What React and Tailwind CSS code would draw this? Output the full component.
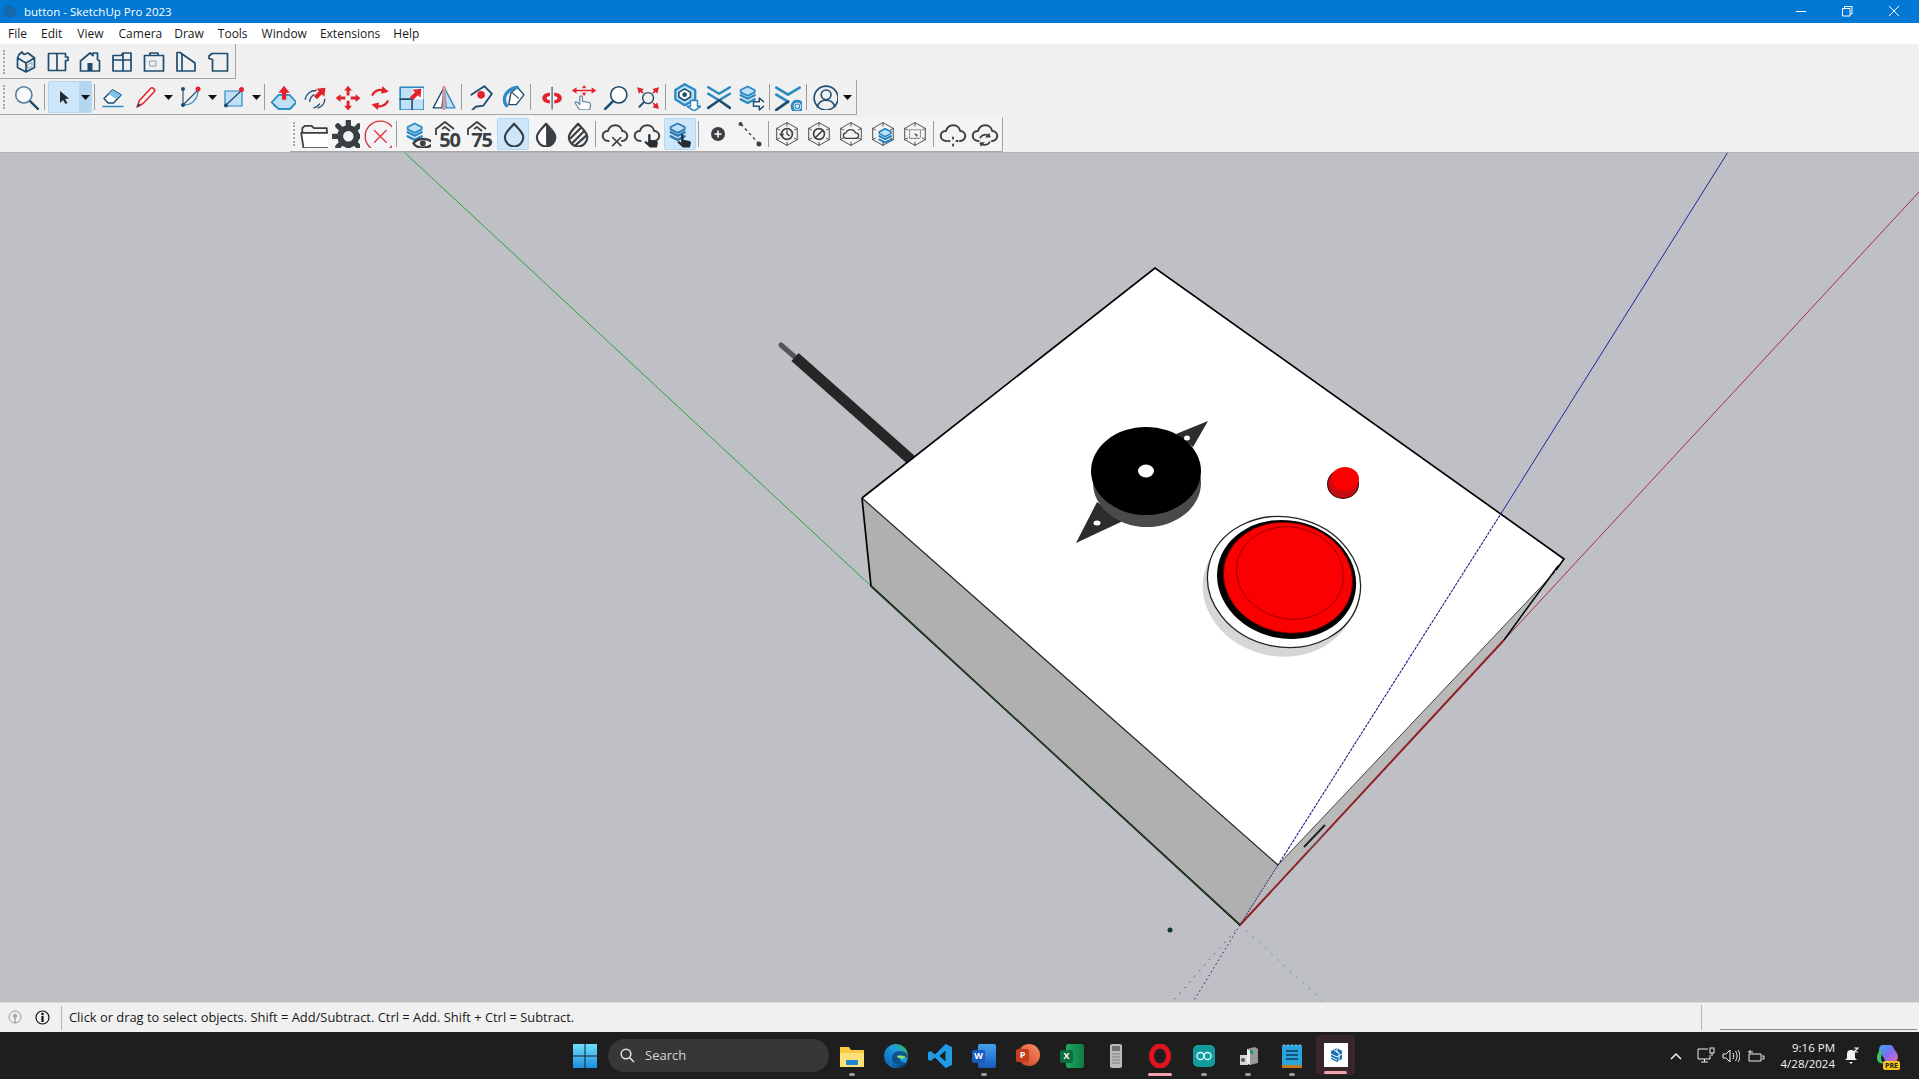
import React from "react";

const N = "#1f4d70", B = "#2b8ac4", L = "#bfe0f5", R = "#e3212b", D = "#3a3f44";

const S = ({ children, s = 24 }) => (
  <svg width={s} height={s} viewBox="0 0 24 24" fill="none" strokeLinecap="round" strokeLinejoin="round">{children}</svg>
);
const Nv = ({ d, w = 1.7 }) => <path d={d} stroke={N} strokeWidth={w} />;
const Arrow = ({ x, y, r = 0, s = 1 }) => (
  <path transform={`translate(${x} ${y}) rotate(${r}) scale(${s})`} d="M0-5l4 5H1.500v5h-3V0H-4z" fill={R} />
);
const Ti = ({ children, className = "w-8" }) => (
  <div className={`flex items-center justify-center h-[30px] shrink-0 ${className}`}>{children}</div>
);
const Act = ({ children, className = "" }) => (
  <div className={`flex items-center justify-center h-[32px] w-8 shrink-0 bg-[#cde6f9] border border-[#b5d8f2] rounded-[2px] ${className}`}>{children}</div>
);
const Sep = () => <div className="mx-[2px] w-px h-[26px] bg-[#9c9c9c] shrink-0" />;
const Grip = ({ className }) => <div className={`w-[2px] h-[24px] border-l-2 border-dotted border-[#a9a9a9] shrink-0 ${className}`} />;
const Dd = () => (
  <div className="flex items-center justify-center h-[30px] w-3 shrink-0">
    <svg width="9" height="5" viewBox="0 0 9 5"><path d="M0 0h9L4.500 5z" fill="#111" /></svg>
  </div>
);

const Hex = ({ children }) => (
  <S s={26}>
    <path d="M12 1.500l9.500 5.300v10.400L12 22.500l-9.500-5.300V6.800z" stroke="#55595c" strokeWidth="1" />
    <path d="M12 1.500v3M2.500 17.200l2.600-1.400M21.500 17.200l-2.600-1.400M12 22.500v-3M2.500 6.800l2.600 1.400M21.500 6.800l-2.600 1.400" stroke="#55595c" strokeWidth="1" />
    {children}
  </S>
);
const Cloud = ({ c = D, w = 1.700 }) => (
  <path d="M6.500 18C3.500 18 1.500 16 1.500 13.500S3.500 9.500 6 9.500C6.800 6.500 9.200 4.500 12.200 4.500c3.200 0 5.500 2.200 6 5 2.500.2 4.300 2 4.300 4.200S20.500 18 18 18" stroke={c} strokeWidth={w} />
);
const Hand = () => (
  <path d="M13 13a1 1 0 012 0v4l5 1c1 .3 1.500 1 1.300 2l-.8 3.500h-6L10 19.500c-.5-1 .8-1.800 1.600-1l1.400 1z" fill="#262c33" />
);
const Layers = ({ c = B }) => (
  <g stroke={c} strokeWidth="2">
    <path d="M4 6l6-3 6 3v2l-6 3-6-3z" fill={L} strokeWidth="1.600" />
    <path d="M4 10.500l6 3 6-3M4 14l6 3 6-3" />
  </g>
);
const Drop = ({ children }) => (
  <S s={26}>
    {children}
    <path d="M13 2.500c4 4.800 8.500 8 8.500 12.500a8.500 8.500 0 01-17 0c0-4.500 4.500-7.700 8.500-12.500z" stroke={D} strokeWidth="2" />
  </S>
);
const House = ({ t }) => (
  <div className="relative w-[30px] h-[28px]">
    <svg width="30" height="28" viewBox="0 0 30 28" className="absolute left-0 top-0">
      <path d="M2 15V9l9-7 9 7M8 9l3-2 5 4" stroke={D} strokeWidth="1.800" fill="none" strokeLinejoin="round" />
    </svg>
    <span className="absolute right-[4px] bottom-[-2px] text-[20px] leading-[20px] font-bold text-[#3a3f44] tracking-[-1px] font-['Open_Sans',sans-serif]">{t}</span>
  </div>
);

const Row1 = () => [
  <S key="1"><Nv d="M3.500 8v9.500L12 22l8.500-4.500V8L14 3l-4 1.500L8 2 5 4.500zM3.500 8l8.500 5 8.500-5M12 13v9" /><path d="M14 14.500l4-2v4l-4 2z" stroke="#7da0b8" /></S>,
  <S key="2"><Nv d="M2.500 3.500h17V7H22v3.500h-2.500v10h-17zM11 3.500v17" /></S>,
  <S key="3"><Nv d="M2.500 21V11L12 3l3 2.500V3h4.500v6.500l2 1.500v10z" /><rect x="9.500" y="13" width="5" height="8" fill={N} /></S>,
  <S key="4"><Nv d="M3 21V5.500h8L13 3h8v18zM3 10h18M13 3v18" /></S>,
  <S key="5"><Nv d="M2.500 5.500H8V3h8v2.500h5.500V21h-19zM2.500 5.500h19" /><rect x="8" y="11" width="6" height="5" stroke="#8aa0b2" /></S>,
  <S key="6"><Nv d="M3 21V2.500h3L21 13v8zM8 4v17" /></S>,
  <S key="7"><Nv d="M6 3.500h15.500v17.500H6.500V9.500L3 8.500V6z" /></S>,
].map((x, i) => <Ti key={i}>{x}</Ti>);

const Search = ({ c = "#5c7f9a" }) => (
  <S s={26}>
    <circle cx="10" cy="10" r="7.500" stroke={c} strokeWidth="1.500" fill="#f7fbfe" />
    <path d="M16 16l7 7" stroke={N} strokeWidth="2.200" />
  </S>
);

export default function App() {
  return (
    <div className="w-[1919px] h-[1079px] overflow-hidden flex flex-col bg-[#f0f0f0] font-['Open_Sans',sans-serif]">
      {/* title bar */}
      <div className="h-[23px] shrink-0 bg-[#0078d4] flex items-center text-white">
        <div className="ml-[3px] w-[13px] h-[13px] rounded-full bg-[#1268ad]" />
        <span className="ml-[8px] text-[11.500px] leading-[23px]">button - SketchUp Pro 2023</span>
        <div className="ml-auto flex items-center">
          <Win><path d="M0 5.500h10" stroke="#fff" /></Win>
          <Win className="ml-[35px]"><path d="M.5 2.500h7.500v7.500H.5zM2.500 2.500V.5h7.500v7.500H8" stroke="#fff" /></Win>
          <Win className="ml-[36px] mr-[19px]"><path d="M0 0l10 10M10 0L0 10" stroke="#fff" /></Win>
        </div>
      </div>
      {/* menu */}
      <div className="h-[21px] shrink-0 bg-white flex items-center pl-[8px] gap-[14px] text-[12px] text-[#1a1a1a]">
        <span>File</span>
        <span>Edit</span>
        <span className="ml-px">View</span>
        <span className="ml-px">Camera</span>
        <span className="-ml-[2px]">Draw</span>
        <span>Tools</span>
        <span>Window</span>
        <span className="-ml-px">Extensions</span>
        <span className="-ml-px">Help</span>
      </div>
      {/* toolbar 1 */}
      <div className="h-[36px] shrink-0 flex items-start">
        <div className="h-[35px] w-[236px] pt-[2px] flex items-center border-r border-b border-[#a6a6a6]">
          <Grip className="ml-[3px] mr-[5px]" />
          <Row1 />
        </div>
      </div>
      {/* toolbar 2 */}
      <div className="h-[36px] shrink-0 flex items-start">
        <div className="h-[35px] w-[857px] flex items-center border-r border-b border-[#a6a6a6]">
          <Grip className="ml-[3px] mr-[5px]" />
          <Ti><Search /></Ti>
          <Sep />
          <div className="flex h-[32px] w-[44px] ml-px bg-[#cde6f9] border border-[#b5d8f2] rounded-[2px] shrink-0">
            <div className="flex-1 flex items-center justify-center">
              <svg width="14" height="16" viewBox="0 0 14 16"><path d="M3 2l9 7.500-4 .5 2.500 4-2 1L6 11l-3 3z" fill="#1f2a33" /></svg>
            </div>
            <div className="w-[12px] bg-[#b5d6ef] flex items-center justify-center">
              <svg width="9" height="5" viewBox="0 0 9 5"><path d="M0 0h9L4.500 5z" fill="#111" /></svg>
            </div>
          </div>
          <Sep />
          <Ti><S><path d="M3 13.500L11.500 5 20 10l-7.500 8H7z" stroke={N} strokeWidth="1.500" fill="#fff" /><path d="M7.500 9L15 14l5-4-8.500-5z" fill="#7ec4ea" /><path d="M2 21.500h20" stroke={B} strokeWidth="1.400" /></S></Ti>
          <Ti className="w-8 ml-px"><S><path d="M3 22l2.500-6.500L17 3c1.500-1 4.500 1.500 3.500 3.500L9 18.500z" stroke={R} strokeWidth="1.500" fill="#fdf0f0" /><path d="M3 22l1.300-4 2.500 2z" fill={N} /></S></Ti>
          <Dd />
          <Ti><S><path d="M5 20l15-15" stroke={N} strokeWidth="1.100" /><path d="M5 4v15" stroke={N} strokeWidth="1.100" /><path d="M6 20c8 0 14-6 14-15" stroke={B} strokeWidth="1.300" /><circle cx="5" cy="4" r="2" fill={N} /><circle cx="5" cy="20" r="2" fill={N} /><circle cx="20" cy="4" r="2.500" fill={R} /></S></Ti>
          <Dd />
          <Ti><S><rect x="3" y="6" width="17" height="15" fill={L} stroke={B} strokeWidth="1.200" /><path d="M4 20L19 6" stroke={N} strokeWidth="1.200" /><circle cx="4" cy="20.500" r="2" fill={N} /><circle cx="19.500" cy="4.500" r="2.500" fill={R} /></S></Ti>
          <Dd />
          <Sep />
          <Ti className="w-8"><S s={26}><path d="M1.500 17L8 10h10l6.500 7-6 6H8z" fill={L} stroke={B} strokeWidth="1.500" /><path d="M3.500 19.500L8 23h10.500l4.500-5" stroke={B} strokeWidth="1.500" /><Arrow x={13} y={8} s={1.300} /></S></Ti>
          <Ti><S s={26}><path d="M3 14c1-5 5-8 10-8M7 16c.5-3 2-5 4-6M15 22c3-1 6-4 6-8M11 22c2-.5 4-2 5-3.500" stroke={N} strokeWidth="1.300" /><Arrow x={17} y={8} r={45} s={1.300} /></S></Ti>
          <Ti><S s={26}><Arrow x={13} y={6} s={.9} /><Arrow x={13} y={20} r={180} s={.9} /><Arrow x={6} y={13} r={-90} s={.9} /><Arrow x={20} y={13} r={90} s={.9} /></S></Ti>
          <Ti><S s={26}><path d="M6 10a8 8 0 0112-3M20 16a8 8 0 01-12 3" stroke={R} strokeWidth="2" /><path d="M15 2l6 5-7 2zM11 24l-6-5 7-2z" fill={R} /></S></Ti>
          <Ti><S s={26}><rect x="2" y="3" width="22" height="21" stroke={B} strokeWidth="1.500" fill={L} /><path d="M2 14h11v10" stroke={N} strokeWidth="1.500" /><rect x="13.500" y="4" width="10" height="10" fill="#fff" /><Arrow x={17} y={9} r={45} s={1.300} /></S></Ti>
          <Ti className="w-8"><S s={26}><path d="M13 3L3 22h8z" stroke={N} strokeWidth="1.300" fill="#fff" /><path d="M13 3l10 19h-8z" stroke={B} strokeWidth="1.300" fill={L} /><path d="M13 3v20" stroke="#d59aa0" strokeWidth="3" /></S></Ti>
          <Sep />
          <Ti className="w-8"><S s={26}><path d="M4 10l12-8 7 7-8 11-7 1-3 3" stroke={N} strokeWidth="1.700" /><circle cx="13" cy="10" r="3.500" fill={R} /></S></Ti>
          <Ti><S s={26}><path d="M11 8l6-5 6 7-7 9H9z" stroke={N} strokeWidth="1.300" fill="#fff" /><path d="M17 3c-5 0-12 5-12 11 0 3 1 5 2 6" stroke={B} strokeWidth="3" /><path d="M12 8l6 5" stroke={N} strokeWidth="1" /></S></Ti>
          <Sep />
          <Ti className="w-8 ml-[2px]"><S s={26}><path d="M13 3v20" stroke={N} strokeWidth="1" /><path d="M4 13c0-3 3-5 7-5v3c-2 0-3 1-3 2 0 1 1 2 3 2v3c-4 0-7-2-7-5zM22 13c0-3-3-5-7-5v3c2 0 3 1 3 2 0 1-1 2-3 2v3c4 0 7-2 7-5z" fill={R} /></S></Ti>
          <Ti><S s={26}><path d="M9 24l-4-6c-.5-1.500 1-2 2-1l2 2V12c0-1.500 2.500-1.500 2.500 0v4l6 1c1.500.5 1.500 2 1.500 3l-1 4z" stroke="#6c8ba2" strokeWidth="1.200" fill="#fff" /><path d="M3 6h20" stroke={R} strokeWidth="1.600" /><path d="M2 6l4-3v6zM24 6l-4-3v6zM11 8l2 3 2-3zM11 4l2-3 2 3z" fill={R} /></S></Ti>
          <Ti><S s={26}><circle cx="15.500" cy="10" r="7.500" stroke={N} strokeWidth="1.500" fill="#fff" /><path d="M10 16L3 23" stroke={N} strokeWidth="2.400" /></S></Ti>
          <Ti><S s={26}><circle cx="13" cy="13" r="5" stroke={N} strokeWidth="1.300" /><path d="M9 17l-4 4" stroke={N} strokeWidth="1.800" /><path d="M3 3l6 1.500L4.500 9zM23 3l-6 1.500L21.500 9zM23 23l-6-1.500 4.500-4.500z" fill={R} /><path d="M5 5l3 3M21 5l-3 3M21 21l-3-3" stroke={R} strokeWidth="1.600" /></S></Ti>
          <Sep />
          <Ti className="w-8 ml-[3px]"><S s={28}><path d="M10 1l9 5v8l-9 5-8-5V6z" stroke={B} strokeWidth="2" fill={L} /><path d="M10 5l5 3v4l-5 3-5-3V8z" stroke={N} strokeWidth="1.400" fill="#fff" /><circle cx="10" cy="10" r="2" fill={N} /><path d="M15 15h6v5h3l-6 4-6-4h3z" fill="#fff" stroke={B} strokeWidth="1.300" /></S></Ti>
          <Ti className="w-[30px]"><S s={26}><path d="M3 4l10 6 10-6M3 10l10 6 10-6" stroke={B} strokeWidth="2.400" transform="translate(0 -1)" /><path d="M3 22l10-7 10 7" stroke={N} strokeWidth="2.400" /></S></Ti>
          <Ti className="w-[34px]"><S s={28}><Layers c={B} /><g transform="translate(3 4)"><path d="M12 12h5V9l6 5-6 5v-3h-5z" fill="#fff" stroke={N} strokeWidth="1.300" /></g></S></Ti>
          <Sep />
          <Ti><S s={28}><path d="M2 4l10 6 10-6M2 10l10 6" stroke={B} strokeWidth="2.400" /><path d="M2 23l10-7" stroke={N} strokeWidth="2.400" /><circle cx="20" cy="20" r="4.500" stroke={B} strokeWidth="2.500" strokeDasharray="2 1.500" /><circle cx="20" cy="20" r="2" stroke={B} strokeWidth="1" /></S></Ti>
          <Sep />
          <Ti><S s={26}><circle cx="13" cy="13" r="11" stroke={N} strokeWidth="1.500" /><circle cx="13" cy="10" r="4.500" stroke={N} strokeWidth="1.500" /><path d="M5 21c1-4 4-6 8-6s7 2 8 6" stroke={N} strokeWidth="1.500" /></S></Ti>
          <Dd />
        </div>
      </div>
      {/* toolbar 3 */}
      <div className="h-[36px] shrink-0 flex items-end">
        <div className="ml-[290px] h-[35px] w-[713px] flex items-center bg-[#f4f4f4] border-r border-b border-[#a6a6a6]">
          <Grip className="ml-[3px] mr-[3px]" />
          <Ti><S s={28}><path d="M2 11V7l2-2h6l2 2h11v4" stroke={D} strokeWidth="1.500" /><path d="M1 11h26l-2 13H3z" stroke={D} strokeWidth="1.500" fill="#fff" /></S></Ti>
          <Ti><S s={28}><circle cx="14" cy="14" r="7" stroke={D} strokeWidth="5" /><path d="M14 1v5M14 22v5M1 14h5M22 14h5M5 5l4 4M19 19l4 4M23 5l-4 4M9 19l-4 4" stroke={D} strokeWidth="4.500" /></S></Ti>
          <Ti><S s={28}><circle cx="14" cy="14" r="13" stroke="#d6343c" strokeWidth="1.200" /><path d="M9 9l10 10M19 9L9 19" stroke="#e23a42" strokeWidth="1.200" /></S></Ti>
          <Sep />
          <Ti className="w-8 ml-[2px]"><S s={28}><Layers /><circle cx="17" cy="20" r="2.500" fill={D} /><path d="M9 20c3-5 13-5 17 0-4 5-14 5-17 0z" stroke={D} strokeWidth="2" /></S></Ti>
          <Ti><House t="50" /></Ti>
          <Ti><House t="75" /></Ti>
          <Act><Drop /></Act>
          <Ti><Drop><path d="M13 3c-4 5-8.500 8-8.500 12a8.500 8.500 0 008.500 8.500z" fill="#fff" /><path d="M13 3c4 5 8.500 8 8.500 12a8.500 8.500 0 01-8.500 8.500z" fill={D} /></Drop></Ti>
          <Ti><Drop><path d="M8 20L18 10M6 16l9-9M11 22l9-8" stroke={D} strokeWidth="2" /></Drop></Ti>
          <Sep />
          <Ti className="w-8 ml-px"><S s={28}><Cloud /><path d="M10 15l7 7M17 15l-7 7" stroke={D} strokeWidth="1.400" /></S></Ti>
          <Ti><S s={28}><Cloud /><Hand /></S></Ti>
          <Act className="ml-px"><S s={28}><Layers c="#2a79b5" /><Hand /></S></Act>
          <Sep />
          <Ti className="w-8 ml-px"><svg width="14" height="14" viewBox="0 0 14 14"><circle cx="7" cy="7" r="7" fill="#3b4045" /><path d="M7 3.500v7M3.500 7h7" stroke="#fff" strokeWidth="1.600" /></svg></Ti>
          <Ti><svg width="26" height="26" viewBox="0 0 26 26"><path d="M4 3l18 20" stroke="#3b4045" strokeWidth="1.400" strokeDasharray="3 3" /><circle cx="3.500" cy="3" r="2" fill="#3b4045" /><circle cx="22" cy="23" r="2.500" fill="#3b4045" /></svg></Ti>
          <Sep />
          <Ti><Hex><circle cx="12" cy="12" r="5" stroke={D} strokeWidth="1.500" /><path d="M12 9v3l2 1.500M5.500 12l2 2 1-2" stroke={D} strokeWidth="1.200" /></Hex></Ti>
          <Ti><Hex><circle cx="12" cy="12" r="5" stroke={D} strokeWidth="1.500" /><path d="M9 15l6-6" stroke={D} strokeWidth="1.500" /></Hex></Ti>
          <Ti><Hex><path d="M8 16c-2 0-3-1-3-2.500S6 11 7.500 11c.5-2 2.500-3 4.500-3s3.500 1.500 4 3c1.500 0 3 1 3 2.500S18 16 16 16z" stroke={D} strokeWidth="1.200" /></Hex></Ti>
          <Ti><Hex><g transform="translate(5 4.500) scale(.9)"><Layers c="#1f7fc0" /></g></Hex></Ti>
          <Ti><Hex><path d="M7 8h10v8" stroke="#8a8a8a" strokeWidth="1" strokeDasharray="2 1" /><path d="M7 8v8h10" stroke="#8a8a8a" strokeWidth="1" strokeDasharray="2 1" /><path d="M11 11l4 2-1.500.5.500 2z" fill={D} /></Hex></Ti>
          <Sep />
          <Ti className="w-8 ml-px"><S s={28}><Cloud /><path d="M12 15v1M12 21v1M8 18h1M15 18h1" stroke={D} strokeWidth="1.600" /></S></Ti>
          <Ti className="w-8"><S s={28}><Cloud /><path d="M8 15c2-3 6-3 8-1M16 19c-2 3-6 3-8 1" stroke={D} strokeWidth="1.500" /><path d="M16 11v4h-4zM8 23v-4h4z" fill={D} /></S></Ti>
        </div>
      </div>
      {/* model canvas */}
      <div className="flex-1 min-h-0 bg-[#bfc0c5] border-t border-[#b0b1b5]">
        <svg className="w-full h-full block" viewBox="0 153 1919 849">
          <path d="M1240 925L1172 1002" stroke="#8a3a4a" strokeWidth="1" strokeDasharray="1.500 6" />
          <path d="M1240 925L1193 1002" stroke="#1c1c90" strokeWidth="1" strokeDasharray="1.500 3" />
          <path d="M1240 925L1324 1002" stroke="#3e9a4e" strokeWidth="1" strokeDasharray="1.500 7" />
          <path d="M404 152L871 586" stroke="#2f9e3f" strokeWidth="1" />
          <path d="M1728 152L1502 512" stroke="#23239e" strokeWidth="1" />
          <path d="M1919 192L1504 640" stroke="#b02a36" strokeWidth="1" />
          <path d="M781 345L796 358" stroke="#555" strokeWidth="5" strokeLinecap="round" />
          <path d="M795 357L918 466" stroke="#262626" strokeWidth="11" />
          <polygon points="862,498 871,586 1240,925 1278,865" fill="#b0b0b0" />
          <polygon points="1278,865 1555,572 1503,640 1240,925" fill="#b9b9b9" />
          <polygon points="1155,268 1564,559 1555,572 1278,865 862,498" fill="#fff" />
          <path d="M862 498L1155 268L1564 559L1556 570" stroke="#000" strokeWidth="1.700" fill="none" />
          <path d="M862 498L1278 865" stroke="#222" strokeWidth="1.200" />
          <path d="M1555 572L1278 865" stroke="#333" strokeWidth=".9" />
          <path d="M862 498L871 586L1240 925" stroke="#000" strokeWidth="1.700" fill="none" />
          <path d="M871 586L1240 925" stroke="#3e9a4e" strokeWidth=".6" />
          <path d="M1502 512L1278 865" stroke="#1c1c90" strokeWidth="1.100" strokeDasharray="3 1" />
          <path d="M1278 865L1240 925" stroke="#222266" strokeWidth="1" strokeDasharray="2 1" />
          <path d="M1240 925L1504 640" stroke="#8f1f27" strokeWidth="2" />
          <path d="M1504 640L1558 566" stroke="#000" strokeWidth="1.500" />
          <path d="M1304 847L1325 825" stroke="#222" strokeWidth="2" />
          <path d="M1309 850L1326 831" stroke="#777" strokeWidth="1" />

          {/* buzzer */}
          <polygon points="1208,421 1176,434 1193,447" fill="#2d2d2d" />
          <polygon points="1076,543 1097,502 1123,521" fill="#2d2d2d" />
          <ellipse cx="1147" cy="483" rx="54" ry="44" fill="#4a4a4a" />
          <ellipse cx="1146" cy="471" rx="55" ry="44" fill="#000" />
          <ellipse cx="1146" cy="471" rx="8" ry="6.500" fill="#fff" />
          <ellipse cx="1187" cy="438" rx="3" ry="2.500" fill="#fff" />
          <ellipse cx="1097" cy="523" rx="3.500" ry="2.500" fill="#fff" />

          {/* small red */}
          <ellipse cx="1343" cy="484" rx="16" ry="15" fill="#2a0a0a" />
          <ellipse cx="1343" cy="484" rx="15" ry="14" fill="#c40d12" />
          <ellipse cx="1345" cy="479" rx="14" ry="12" fill="#fb0000" />

          {/* big button */}
          <g transform="rotate(12 1284 582)">
            <ellipse cx="1281" cy="591" rx="77" ry="66" fill="#d6d6d6" />
            <ellipse cx="1284" cy="582" rx="77" ry="65" fill="#fff" stroke="#222" strokeWidth="1.300" />
            <ellipse cx="1286" cy="579" rx="70" ry="59" fill="#000" />
            <ellipse cx="1287" cy="577" rx="65" ry="55" fill="#fb0000" stroke="#6b0000" strokeWidth=".8" />
            <ellipse cx="1288" cy="572" rx="54" ry="46" fill="none" stroke="#8c0000" strokeWidth=".8" />
          </g>
          <circle cx="1170" cy="930" r="2.500" fill="#123a28" />
        </svg>
      </div>
      {/* status */}
      <div className="h-[30px] shrink-0 flex items-center bg-[#f0f0f0] border-t border-[#d8d8dc]">
        <div className="w-[30px] pl-[8px] flex">
          <svg width="14" height="16" viewBox="0 0 14 16"><circle cx="7" cy="7" r="6" stroke="#9a9a9a" fill="none" /><circle cx="7" cy="6" r="2.200" fill="#aaa" /><path d="M7 8v5" stroke="#aaa" strokeWidth="1.600" /></svg>
        </div>
        <div className="w-[24px] flex justify-center">
          <svg width="15" height="15" viewBox="0 0 15 15"><circle cx="7.500" cy="7.500" r="6.500" stroke="#111" strokeWidth="1.200" fill="none" /><circle cx="7.500" cy="4" r="1.300" fill="#111" /><path d="M7.500 6v6" stroke="#111" strokeWidth="2.200" /></svg>
        </div>
        <div className="ml-[7px] w-px h-[24px] bg-[#b4b4b4]" />
        <span className="ml-[7px] pt-px text-[12.900px] text-[#1a1a1a] whitespace-nowrap">Click or drag to select objects. Shift = Add/Subtract. Ctrl = Add. Shift + Ctrl = Subtract.</span>
        <div className="ml-auto flex items-stretch h-full">
          <div className="w-px my-[2px] bg-[#b4b4b4]" />
          <div className="ml-[18px] mr-[2px] w-[197px] h-[27px] border-b border-[#8a8a8a]" />
        </div>
      </div>
      {/* taskbar */}
      <div className="h-[47px] shrink-0 bg-[#1e1e1e] flex items-center pl-[573px] text-white">
        <svg width="24" height="24" viewBox="0 0 24 24" className="shrink-0">
          <defs><linearGradient id="win" x1="0" y1="0" x2="0" y2="1"><stop offset="0" stopColor="#6ce0fb" /><stop offset="1" stopColor="#1a90df" /></linearGradient></defs>
          <path d="M0 0h11.500v11.500H0zM12.500 0H24v11.500H12.500zM0 12.500h11.500V24H0zM12.500 12.500H24V24H12.500z" fill="url(#win)" />
        </svg>
        <div className="ml-[11px] w-[221px] h-[33px] rounded-full bg-[#373737] flex items-center pl-[12px] text-[13px] text-[#d4d4d4] shrink-0">
          <svg width="15" height="15" viewBox="0 0 15 15"><circle cx="6" cy="6" r="4.800" stroke="#e4e4e4" strokeWidth="1.500" fill="none" /><path d="M9.500 9.500L14 14" stroke="#e4e4e4" strokeWidth="1.500" /></svg>
          <span className="ml-[10px] pt-px">Search</span>
        </div>
        <div className="ml-px flex">
          <Tb dot><svg width="24" height="22" viewBox="0 0 24 22"><path d="M0 2h9l2 3h13v15H0z" fill="#fbc93e" /><path d="M0 8h24v14H0z" fill="#fde07a" /><rect x="6" y="15" width="12" height="5" rx="1" fill="#1e86d0" /></svg></Tb>
          <Tb>
            <svg width="24" height="24" viewBox="0 0 24 24">
              <defs><linearGradient id="edge" x1="0" y1="1" x2="1" y2="0"><stop offset="0" stopColor="#0c59a4" /><stop offset=".6" stopColor="#1b9de2" /><stop offset="1" stopColor="#35c14f" /></linearGradient></defs>
              <circle cx="12" cy="12" r="12" fill="url(#edge)" />
              <path d="M24 13c0-3-3-6-8-6-5 0-8 3-8 7 0 5 4 7 8 7-3 1-7 0-9-3 1 3 5 6 9 6 4 0 7-3 8-6-2 1-4 1-6 0-2-1-3-3-1-4 2 0 5 1 7-1z" fill="#0e3a77" opacity=".75" />
              <path d="M13 12c3-1 7 0 9 1-1 2-5 2-7 1-1 0-2-1-2-2z" fill="#8ee07a" />
            </svg>
          </Tb>
          <Tb><svg width="24" height="24" viewBox="0 0 24 24"><path d="M17.500 0L24 3v18l-6.500 3L7 13.500l-4.500 3.500L0 15.500v-7L2.500 7 7 10.500zM17.500 6.500L11.500 12l6 5.500z" fill="#1e9ae6" /></svg></Tb>
          <Tb dot>
            <div className="relative w-[24px] h-[24px]">
              <div className="absolute right-0 top-0 w-[18px] h-[24px] rounded-[2px] bg-[linear-gradient(#41a5ee,#185abd)]" />
              <div className="absolute left-0 top-[6px] w-[13px] h-[13px] rounded-[2px] bg-[#185abd] flex items-center justify-center text-[9px] font-bold text-white">W</div>
            </div>
          </Tb>
          <Tb>
            <div className="relative w-[24px] h-[24px]">
              <div className="absolute right-0 top-0 w-[22px] h-[22px] rounded-full bg-[linear-gradient(45deg,#c43e1c,#ff8f6b)]" />
              <div className="absolute left-0 top-[5px] w-[13px] h-[13px] rounded-[2px] bg-[#c43e1c] flex items-center justify-center text-[9px] font-bold text-white">P</div>
            </div>
          </Tb>
          <Tb>
            <div className="relative w-[24px] h-[24px]">
              <div className="absolute right-0 top-0 w-[18px] h-[24px] rounded-[2px] bg-[linear-gradient(90deg,#21a366,#107c41)]" />
              <div className="absolute left-0 top-[6px] w-[13px] h-[13px] rounded-[2px] bg-[#0e6b3a] flex items-center justify-center text-[9px] font-bold text-white">X</div>
            </div>
          </Tb>
          <Tb><svg width="12" height="24" viewBox="0 0 12 24"><rect width="12" height="24" rx="2" fill="#b9bcbc" /><rect x="2" y="2" width="8" height="5" fill="#70746f" /><path d="M2 10h8M2 13h8M2 16h8M2 19h8" stroke="#7b7f7c" strokeWidth="1" /></svg></Tb>
          <Tb bar><svg width="24" height="24" viewBox="0 0 24 24"><ellipse cx="12" cy="12" rx="8.500" ry="10" stroke="#e0141e" strokeWidth="5" fill="none" /></svg></Tb>
          <Tb dot><svg width="22" height="22" viewBox="0 0 22 22"><rect width="22" height="22" rx="5" fill="#119aa0" /><circle cx="7.500" cy="11" r="3.500" stroke="#dff" strokeWidth="1.300" fill="none" /><circle cx="14.500" cy="11" r="3.500" stroke="#dff" strokeWidth="1.300" fill="none" /></svg></Tb>
          <Tb dot><svg width="22" height="22" viewBox="0 0 22 22"><path d="M3 10h8v10H3z" fill="#d5d5d5" /><path d="M10 4l8-2 3 2v14l-8 2-3-2z" fill="#9a9a9a" /><path d="M10 4l3 2v14l-3-2z" fill="#efefef" /><rect x="13" y="5" width="3" height="4" fill="#1aa06c" /><circle cx="6" cy="15" r="2" fill="#555" /></svg></Tb>
          <Tb dot><svg width="20" height="24" viewBox="0 0 20 24"><rect y="1" width="20" height="22" rx="1" fill="#2aa6dc" /><rect y="21" width="20" height="3" fill="#c77b21" /><path d="M4 7h12M4 11h12M4 15h12" stroke="#0c3d5e" strokeWidth="1.500" /><path d="M2 0v2M6 0v2M10 0v2M14 0v2M18 0v2" stroke="#9ad" strokeWidth="1" /></svg></Tb>
          <div className="w-[39px] h-[40px] mt-[3px] ml-[2px] rounded-[4px] bg-[#38262a] flex items-center justify-center relative shrink-0">
            <div className="w-[24px] h-[24px] bg-white flex items-center justify-center">
              <svg width="20" height="20" viewBox="0 0 20 20"><path d="M5 6l6-3 5 3v8l-5 3-6-3z" fill="#1670b3" /><path d="M5 9l6 3 5-3M5 12l6 3M11 3v5M8 5l5 3v8" stroke="#fff" strokeWidth="1" fill="none" /></svg>
            </div>
            <div className="absolute bottom-[1px] left-[8px] w-[23px] h-[3px] rounded-full bg-[#f3a1ae]" />
          </div>
        </div>
        <div className="ml-auto flex items-center">
          <svg width="12" height="8" viewBox="0 0 12 8"><path d="M1 7l5-5 5 5" stroke="#f2f2f2" strokeWidth="1.500" fill="none" /></svg>
          <svg className="ml-[15px]" width="18" height="17" viewBox="0 0 18 17" fill="none"><path d="M11 2H1v10h12V8M4 15h7M7.500 12v3" stroke="#eee" strokeWidth="1" /><rect x="13" y="1" width="4" height="5" stroke="#eee" /><path d="M15 6v3" stroke="#eee" /></svg>
          <svg className="ml-[7px]" width="18" height="14" viewBox="0 0 18 14" fill="none"><path d="M1 5h3l4-4v12L4 9H1zM11 4c1 2 1 4 0 6M13.500 2c2 3 2 7 0 10M16 1c2.500 3.500 2.500 8.500 0 12" stroke="#eee" strokeWidth="1" /></svg>
          <svg className="ml-[7px]" width="18" height="14" viewBox="0 0 18 14" fill="none"><path d="M3 1v3M1 3h5M2 5H14v7H2zM15 7h2v3h-2" stroke="#eee" strokeWidth="1" /></svg>
          <div className="ml-[4px] flex flex-col items-end text-[11.500px] leading-[16px] text-[#f2f2f2] w-[66px]">
            <span>9:16 PM</span>
            <span className="whitespace-nowrap">4/28/2024</span>
          </div>
          <svg className="ml-[9px]" width="16" height="18" viewBox="0 0 16 18"><path d="M7 3a4 4 0 00-4 4v4l-2 2h12l-2-2V7a4 4 0 00-4-4zM5 15h4l-2 2z" fill="#f2f2f2" /><path d="M10 1h4l-4 4h4" stroke="#f2f2f2" strokeWidth="1.200" fill="none" /></svg>
          <div className="relative ml-[16px] mr-[19px] w-[24px] h-[24px] shrink-0">
            <svg width="24" height="20" viewBox="0 0 24 20" className="absolute left-0 top-0">
              <defs><linearGradient id="cop" x1="0" y1="0" x2="1" y2="1"><stop offset="0" stopColor="#35a9f0" /><stop offset=".5" stopColor="#7c6df2" /><stop offset="1" stopColor="#e86bb0" /></linearGradient></defs>
              <path d="M7 1h7c2 0 3 1 4 4l3 4c1 2 2 7-2 9h-7c-2 0-3-1-4-4L4 9C2 6 3 1 7 1z" fill="url(#cop)" />
              <path d="M1 14c0-4 2-8 5-9l-1 9c0 2 1 4 3 5-4 1-7-1-7-5z" fill="#3ec46b" />
            </svg>
            <div className="absolute left-[7px] bottom-[-2px] w-[17px] h-[9px] rounded-[2px] bg-[#f8c21c] text-[7px] leading-[9px] font-bold text-[#222] text-center">PRE</div>
          </div>
        </div>
      </div>
    </div>
  );
}

function Win({ children, className = "" }) {
  return <svg className={className} width="11" height="11" viewBox="0 0 11 11" fill="none">{children}</svg>;
}

function Tb({ children, dot, bar }) {
  return (
    <div className="relative w-[44px] h-[47px] flex items-center justify-center shrink-0">
      {children}
      {dot && <div className="absolute bottom-[3px] left-[19px] w-[6px] h-[3px] rounded-full bg-[#9b9b9b]" />}
      {bar && <div className="absolute bottom-[3px] left-[10px] w-[24px] h-[3px] rounded-full bg-[#f3a1ae]" />}
    </div>
  );
}
